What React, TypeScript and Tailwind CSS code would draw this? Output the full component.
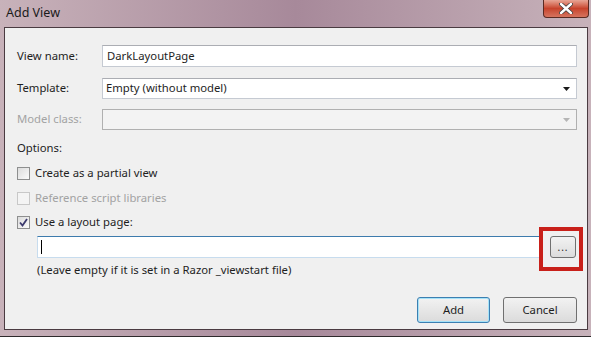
import React from "react"

const font = { fontFamily: "'Noto Sans', 'DejaVu Sans', sans-serif" }

function Checkbox({ checked, disabled }: { checked?: boolean; disabled?: boolean }) {
    return (
        <div
            className={`w-[13px] h-[13px] border flex items-center justify-center ${
                disabled ? "border-[#c8c8c8] bg-[#f4f4f4]" : "border-[#8e8f8f] bg-gradient-to-br from-[#dcdcdc] to-[#fbfbfb]"
            }`}
        >
            {checked && (
                <svg width="9" height="9" viewBox="0 0 9 9">
                    <path d="M1 4.5 L3.5 7.5 L8 1" stroke="#3c3a6e" strokeWidth="1.8" fill="none" />
                </svg>
            )}
        </div>
    )
}

function Caret({ color }: { color: string }) {
    return (
        <svg width="7" height="4" viewBox="0 0 7 4">
            <path d="M0 0 H7 L3.5 4 Z" fill={color} />
        </svg>
    )
}

export default function App() {
    return (
        <div className="w-[591px] h-[339px] bg-white overflow-hidden text-[11.3px] text-[#1e1e1e]" style={font}>
            <div className="h-[337px] flex flex-col bg-gradient-to-r from-[#c8b2ba] via-[#a7899a] to-[#c7b2ba] border-b border-[#2e2a2c]">
                {/* title bar */}
                <div className="h-[27px] flex items-start justify-between shrink-0">
                    <span className="pl-[6px] pt-[4px] text-[12.5px] text-[#1a1a1a]">Add View</span>
                    <div className="mr-[2px] w-[46px] h-[18px] rounded-b-[4px] border border-[#5a2a22] border-t-0 bg-gradient-to-b from-[#e7a595] via-[#c7432c] to-[#d5735e] flex items-center justify-center">
                        <svg width="14" height="11" viewBox="0 0 14 11">
                            <path d="M2 1 L12 10 M12 1 L2 10" stroke="#3b3b3b" strokeWidth="4" strokeLinecap="round" />
                            <path d="M2 1 L12 10 M12 1 L2 10" stroke="#ffffff" strokeWidth="2.4" strokeLinecap="round" />
                        </svg>
                    </div>
                </div>

                {/* client area */}
                <div className="flex-1 ml-[4px] mr-[3px] mb-[6px] border border-[#4a3b41] bg-[#f0f0f0] pl-[12px] pr-[10px] pt-[17px] flex flex-col">
                    <div className="flex items-center h-[22px]">
                        <span className="w-[85px]">View name:</span>
                        <div className="flex-1 h-full bg-white border border-[#c5cad2] border-t-[#abadb3] pl-[4px] flex items-center">DarkLayoutPage</div>
                    </div>
                    <div className="flex items-center h-[21px] mt-[11px]">
                        <span className="w-[85px]">Template:</span>
                        <div className="flex-1 h-full bg-white border border-[#c5cad2] border-t-[#abadb3] pl-[3px] pr-[6px] flex items-center justify-between">
                            <span>Empty (without model)</span>
                            <Caret color="#1a1a1a" />
                        </div>
                    </div>
                    <div className="flex items-center h-[21px] mt-[10px]">
                        <span className="w-[85px] text-[#a3a3a3]">Model class:</span>
                        <div className="flex-1 h-full bg-[#f3f3f3] border border-[#b0b0b0] pr-[6px] flex items-center justify-end">
                            <Caret color="#b5b5b5" />
                        </div>
                    </div>

                    <div className="mt-[10px] h-[16px] leading-[16px]">Options:</div>

                    <div className="flex items-center gap-[5px] h-[16px] mt-[9px]">
                        <Checkbox />
                        <span>Create as a partial view</span>
                    </div>
                    <div className="flex items-center gap-[5px] h-[16px] mt-[9px] text-[#a3a3a3]">
                        <Checkbox disabled />
                        <span>Reference script libraries</span>
                    </div>
                    <div className="flex items-center gap-[5px] h-[16px] mt-[8px]">
                        <Checkbox checked />
                        <span>Use a layout page:</span>
                    </div>

                    <div className="flex items-center h-[22px] mt-[6px] pl-[20px]">
                        <div className="flex-1 h-full bg-white border border-[#c7dcee] border-t-[#3d7bad] pl-[3px] flex items-center">
                            <div className="w-px h-[14px] bg-black" />
                        </div>
                        <div className="relative ml-[8px] mr-[1px]">
                            <div className="w-[26px] h-[22px] rounded-[3px] border border-[#707070] bg-gradient-to-b from-[#f2f2f2] to-[#dcdcdc] flex items-end justify-center pb-[5px] text-[10px] leading-none">
                                <span className="tracking-[1px]">...</span>
                            </div>
                            <div className="absolute -left-[11px] -right-[7px] -top-[9px] -bottom-[13px] border-[4px] border-[#c8201a]" />
                        </div>
                    </div>

                    <div className="pl-[20px] mt-[4px] h-[16px] leading-[16px]">(Leave empty if it is set in a Razor _viewstart file)</div>

                    <div className="flex justify-end gap-[13px] mt-[19px]">
                        <div className="w-[73px] h-[26px] rounded-[3px] border border-[#3c7fb1] shadow-[inset_0_0_0_1px_#a5e2f8] bg-gradient-to-b from-[#f2f2f2] to-[#dbdbdb] flex items-center justify-center">
                            Add
                        </div>
                        <div className="w-[74px] h-[26px] rounded-[3px] border border-[#707070] bg-gradient-to-b from-[#f2f2f2] to-[#dbdbdb] flex items-center justify-center">
                            Cancel
                        </div>
                    </div>
                </div>
            </div>
        </div>
    )
}
